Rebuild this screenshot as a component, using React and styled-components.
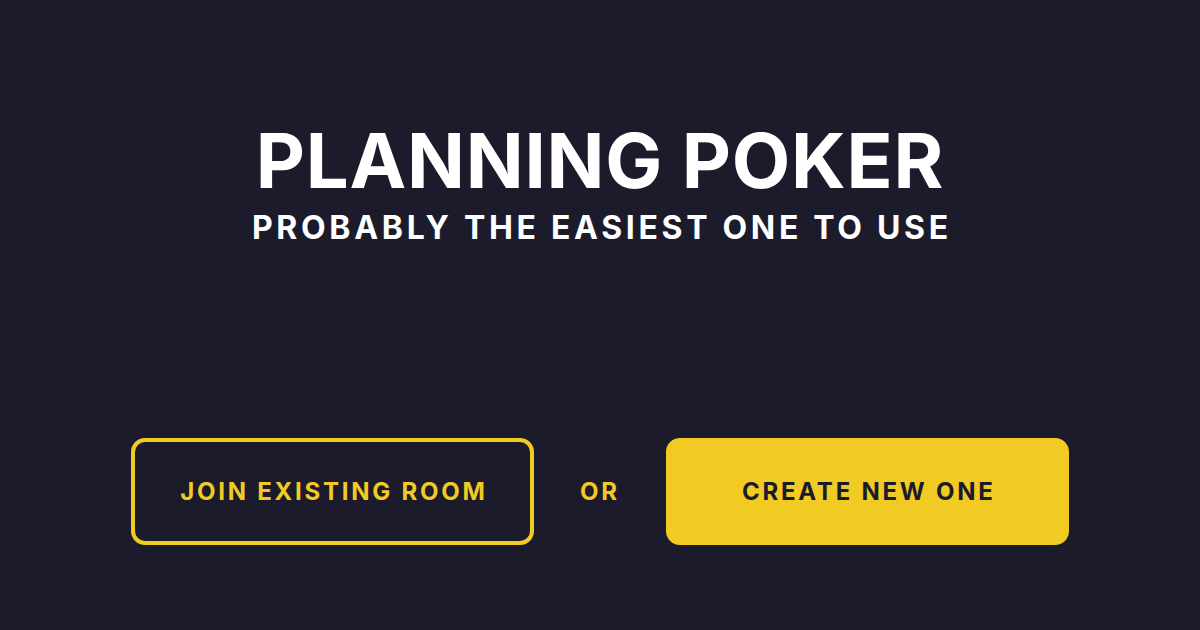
import React from 'react'
import styled, { createGlobalStyle } from 'styled-components';

const GlobalStyle = createGlobalStyle`
  html, body {
    margin: 0;
    padding: 0;
    background: #1c1b2b;
  }
  body {
    font-family: Inter, "DejaVu Sans", sans-serif;
  }
`

const Page = styled.main`
  width: 1200px;
  height: 630px;
  box-sizing: border-box;
  display: flex;
  flex-direction: column;
  align-items: center;
  padding-top: 120px;
  background: #1c1b2b;
`

const Title = styled.h1`
  margin: 0;
  color: #ffffff;
  font-size: 76px;
  font-weight: 700;
  line-height: 80px;
  letter-spacing: 0.01em;
`

const Subtitle = styled.h2`
  margin: 10px 0 0;
  color: #ffffff;
  font-size: 32px;
  font-weight: 700;
  line-height: 36px;
  letter-spacing: 0.115em;
  margin-right: -0.115em;
`

const Actions = styled.div`
  display: flex;
  align-items: center;
  gap: 46px;
  margin-top: 192px;
`

const Button = styled.button`
  width: 403px;
  height: 107px;
  box-sizing: border-box;
  border-radius: 14px;
  border: 4px solid #f1ca23;
  background: ${p => (p.$filled ? '#f1ca23' : 'transparent')};
  color: ${p => (p.$filled ? '#1c1b2b' : '#f1ca23')};
  font-family: inherit;
  font-size: 24px;
  font-weight: 700;
  letter-spacing: 0.115em;
  text-indent: 0.115em;
  cursor: pointer;
`

const Or = styled.span`
  color: #f1ca23;
  font-size: 24px;
  font-weight: 700;
  letter-spacing: 0.115em;
`

const App = () => {
    return (
        <>
            <GlobalStyle />
            <Page>
                <Title>PLANNING POKER</Title>
                <Subtitle>PROBABLY THE EASIEST ONE TO USE</Subtitle>
                <Actions>
                    <Button>JOIN EXISTING ROOM</Button>
                    <Or>OR</Or>
                    <Button $filled>CREATE NEW ONE</Button>
                </Actions>
            </Page>
        </>
    )
}

export default App;
